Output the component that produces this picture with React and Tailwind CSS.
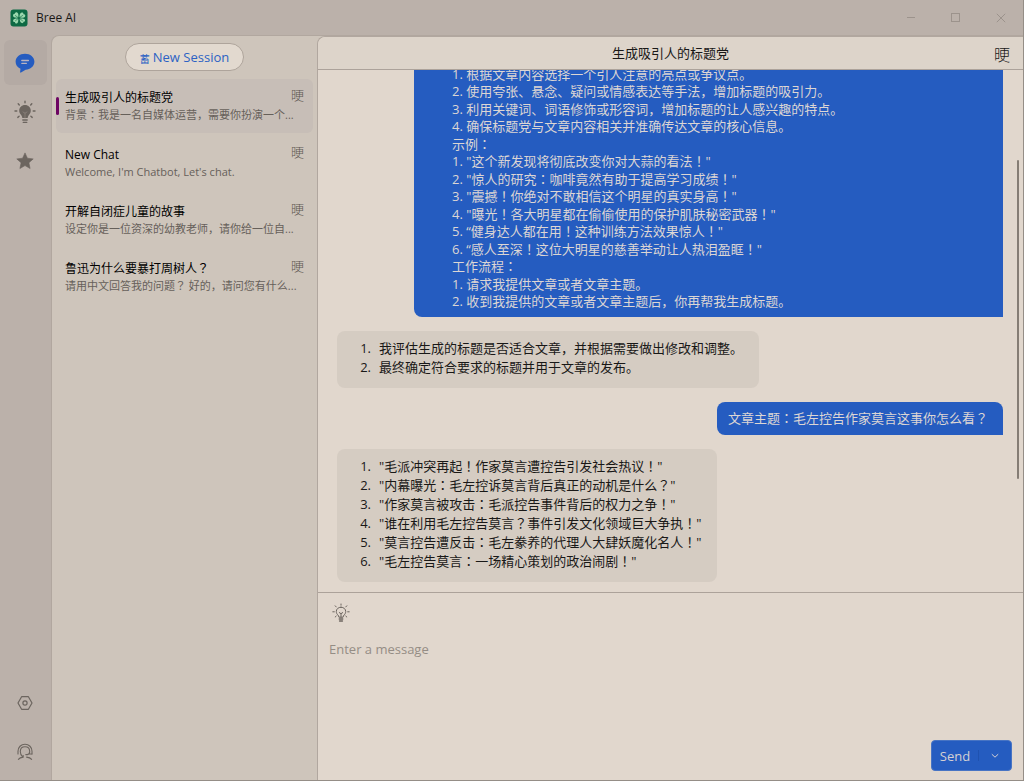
const MORE = "\u{231B3}";

const sessions = [
  { title: "生成吸引人的标题党", preview: "背景：我是一名自媒体运营，需要你扮演一个...", active: true },
  { title: "New Chat", preview: "Welcome, I'm Chatbot, Let's chat." },
  { title: "开解自闭症儿童的故事", preview: "设定你是一位资深的幼教老师，请你给一位自..." },
  { title: "鲁迅为什么要暴打周树人？", preview: "请用中文回答我的问题？ 好的，请问您有什么..." },
];

const promptLines = [
  "1. 根据文章内容选择一个引人注意的亮点或争议点。",
  "2. 使用夸张、悬念、疑问或情感表达等手法，增加标题的吸引力。",
  "3. 利用关键词、词语修饰或形容词，增加标题的让人感兴趣的特点。",
  "4. 确保标题党与文章内容相关并准确传达文章的核心信息。",
  "示例：",
  "1. \"这个新发现将彻底改变你对大蒜的看法！\"",
  "2. \"惊人的研究：咖啡竟然有助于提高学习成绩！\"",
  "3. \"震撼！你绝对不敢相信这个明星的真实身高！\"",
  "4. \"曝光！各大明星都在偷偷使用的保护肌肤秘密武器！\"",
  "5. “健身达人都在用！这种训练方法效果惊人！\"",
  "6. “感人至深！这位大明星的慈善举动让人热泪盈眶！\"",
  "工作流程：",
  "1. 请求我提供文章或者文章主题。",
  "2. 收到我提供的文章或者文章主题后，你再帮我生成标题。",
];

const stepLines = [
  "我评估生成的标题是否适合文章，并根据需要做出修改和调整。",
  "最终确定符合要求的标题并用于文章的发布。",
];

const titleLines = [
  "\"毛派冲突再起！作家莫言遭控告引发社会热议！\"",
  "\"内幕曝光：毛左控诉莫言背后真正的动机是什么？\"",
  "\"作家莫言被攻击：毛派控告事件背后的权力之争！\"",
  "\"谁在利用毛左控告莫言？事件引发文化领域巨大争执！\"",
  "\"莫言控告遭反击：毛左豢养的代理人大肆妖魔化名人！\"",
  "\"毛左控告莫言：一场精心策划的政治闹剧！\"",
];

/* Full-width colons and marks are set centred in their em box. */
function Zh({ children }) {
  return children.split(/([：！？])/).map((part, i) =>
    i % 2 ? (
      <span key={i} lang="zh-TW" className="font-['Noto_Sans_CJK_TC',sans-serif] leading-none">{part}</span>
    ) : (
      part
    )
  );
}

function Logo() {
  return (
    <svg viewBox="0 0 18 18" className="size-[18px]" aria-hidden="true">
      <rect x="0.5" y="0.5" width="17" height="17" rx="3" fill="#0d6a44" />
      <g fill="#9bd8ae">
        <path d="M8.300 8.600C5.500 9 3 8.500 3 6.500c0-1.300 1-1.900 1.900-1.800C5 3.500 5.900 3 6.800 3.200 8.500 3.600 8.600 6 8.300 8.600Z" />
        <path d="M9.500 8.600c-.1-2.600.5-4.700 2.300-5 1.100-.1 1.700.6 1.700 1.600 1.100 0 1.900.7 1.800 1.700-.2 1.700-2.600 2-5.800 1.700Z" />
        <path d="M8.200 9.500c.3 2.400 0 4.700-1.600 5-1 .2-1.700-.5-1.700-1.500-1.100.1-1.900-.6-1.800-1.600.2-1.700 2.500-2 5.100-1.900Z" />
        <path d="M9.600 9.500c3 0 5.400 0 5.500 1.700.1 1-.8 1.500-1.600 1.500 0 1-.7 1.600-1.600 1.400-1.600-.3-2.100-2.400-2.300-4.600Z" />
      </g>
      <path d="M5 6.300 8.800 9l4.300-2.800M5.200 12 8.800 9l4 3" fill="none" stroke="#0d6a44" strokeWidth="0.600" />
    </svg>
  );
}

function ChatIcon() {
  return (
    <svg viewBox="0 0 20 20" className="size-5" aria-hidden="true">
      <path d="M10 .8c5.300 0 9.400 3.500 9.400 8 0 4.400-4 7.700-8.800 7.900L6 19.600c-.5.300-1-.1-.9-.6l.4-3.300C2.500 14.400.6 11.900.6 8.800c0-4.500 4.100-8 9.400-8Z" fill="#255cc0" />
      <path d="M6.800 7.500h6.600M6.800 10.300h4.600" stroke="#b9b3c0" strokeWidth="1.300" strokeLinecap="round" />
    </svg>
  );
}

function BulbSolid() {
  return (
    <svg viewBox="0 0 22 24" className="h-6 w-[22px]" aria-hidden="true" fill="none" stroke="#6c655f" strokeWidth="1.400" strokeLinecap="round">
      <path d="M11 5c3.400 0 5.800 2.500 5.800 5.500 0 2-.9 3.300-1.900 4.500-.8 1-1.100 1.800-1.200 3H8.300c-.1-1.200-.4-2-1.200-3-1-1.200-1.900-2.500-1.900-4.500C5.200 7.500 7.600 5 11 5Z" fill="#6c655f" stroke="none" />
      <path d="M8.800 20h4.400M9.300 22.400h3.400M11 1.200v1.600M4.200 3.800l1.100 1.200M17.800 3.800 16.700 5M1 11h1.800M19.200 11H21M3.800 17.400l1.300-1.100M18.200 17.400l-1.300-1.100" />
      <path d="m9 12 2 1.200 2-1.200M11 13.200V18" stroke="#8f8780" strokeWidth="0.700" />
    </svg>
  );
}

function Star() {
  return (
    <svg viewBox="0 0 18 18" className="size-[18px]" aria-hidden="true">
      <path d="m9 .9 2.400 5.300 5.800.7-4.300 3.900 1.200 5.700L9 13.600l-5.100 2.900 1.200-5.700L.8 6.900l5.800-.7Z" fill="#6c655f" stroke="#6c655f" strokeLinejoin="round" strokeWidth="0.600" />
    </svg>
  );
}

function BulbOutline() {
  return (
    <svg viewBox="0 0 18 20" className="h-5 w-[18px]" aria-hidden="true" fill="none" stroke="#6c655f" strokeWidth="1" strokeLinecap="round">
      <path d="M9 4.200c2.900 0 4.700 2 4.700 4.300 0 1.700-.8 2.700-1.600 3.500-.6.700-.9 1.300-1 2.200H6.900c-.1-.9-.4-1.500-1-2.200-.8-.8-1.600-1.800-1.600-3.500 0-2.300 1.800-4.300 4.700-4.300Z" />
      <path d="M7.300 9.600 9 10.700l1.700-1.100M9 10.700v3.500M9 1v1.200M3.200 2.800l1 1.100M14.800 2.800l-1 1.100M.8 8.800h1.500M15.700 8.800h1.500M3.200 14l1-.9M14.800 14l-1-.9" />
      <path d="M7.300 16h3.400M7.600 18h2.800" strokeWidth="1.500" />
    </svg>
  );
}

function Settings() {
  return (
    <svg viewBox="0 0 16 16" className="size-4" aria-hidden="true" fill="none" stroke="#6c655f" strokeWidth="1.200" strokeLinejoin="round">
      <path d="M4.600 1.700h6.800L15 8l-3.600 6.300H4.600L1 8Z" />
      <circle cx="8" cy="8" r="2.100" />
    </svg>
  );
}

function Support() {
  return (
    <svg viewBox="0 0 16 18" className="h-[18px] w-4" aria-hidden="true" fill="none" stroke="#6c655f" strokeWidth="1.100" strokeLinecap="round">
      <path d="M1 11V8.300C1 4.300 4 1.200 8 1.200s7 3.100 7 7.100V11" />
      <path d="M3.300 8.500c0-2.900 1.900-4.800 4.700-4.800s4.700 1.900 4.700 4.800c0 2-.9 2.900-2.300 3.100H8.800M3.300 8.500c0 2.600.7 3.700 2.200 5M12.600 11h2.200" />
      <path d="M6.200 12.500v1.600c-2 .2-3.800.9-4.800 2.200M9.600 14.100c2.200.2 4 .9 5 2.200" />
    </svg>
  );
}

function Answer({ lines }) {
  return (
    <ol className="self-start rounded-lg bg-[#d5ccc2] pt-2 pr-4 pb-[11px] text-[13px] leading-[19px] text-[#191817]">
      {lines.map((line, i) => (
        <li key={line} className="flex gap-2">
          <span className="w-[34px] shrink-0 text-right">{i + 1}.</span>
          <span><Zh>{line}</Zh></span>
        </li>
      ))}
    </ol>
  );
}

export default function App() {
  return (
    <div className="flex h-screen flex-col overflow-hidden border-r border-b border-[#958e87] bg-[#bbb1aa] font-['Open_Sans','Noto_Sans_CJK_SC',sans-serif] text-[#191817]">
      <header className="flex h-[35px] shrink-0 items-center pl-[10px]">
        <Logo />
        <h1 className="ml-2 text-[12px] leading-4">Bree AI</h1>
        <div className="ml-auto flex text-[#9c938c]">
          <button aria-label="Minimize" className="flex h-8 w-[45px] items-center justify-center">
            <svg viewBox="0 0 10 10" className="size-[10px]" fill="none" stroke="currentColor"><path d="M1 4.500h8" /></svg>
          </button>
          <button aria-label="Maximize" className="flex h-8 w-[45px] items-center justify-center">
            <svg viewBox="0 0 10 10" className="size-[10px]" fill="none" stroke="currentColor"><rect x="0.500" y="0.500" width="8" height="8" /></svg>
          </button>
          <button aria-label="Close" className="flex h-8 w-[45px] items-center justify-center">
            <svg viewBox="0 0 10 10" className="size-[10px]" fill="none" stroke="currentColor"><path d="m.8.8 8.400 8.400M9.200.8.800 9.200" /></svg>
          </button>
        </div>
      </header>

      <div className="flex min-h-0 grow">
        <nav className="flex w-[51px] shrink-0 flex-col items-center pt-[5px] pr-px pb-[6px]">
          <button aria-label="Chat" className="flex h-[45px] w-[43px] items-center justify-center rounded-md bg-[#b4aaa4]"><ChatIcon /></button>
          <button aria-label="Prompts" className="mt-1 flex h-[45px] w-[43px] items-center justify-center"><BulbSolid /></button>
          <button aria-label="Favorites" className="mt-1 flex h-[45px] w-[43px] items-center justify-center"><Star /></button>
          <button aria-label="Settings" className="mt-auto flex h-[45px] w-[43px] items-center justify-center"><Settings /></button>
          <button aria-label="Support" className="mt-1 flex h-[45px] w-[43px] items-center justify-center"><Support /></button>
        </nav>

        <div className="flex min-w-0 grow rounded-tl-lg border-t border-l border-[#b1a79f] bg-[#cec5bb]">
          <aside className="flex w-[265px] shrink-0 flex-col px-1 pt-[7px]">
            <button className="flex h-7 w-[119px] items-center justify-center gap-[3px] self-center rounded-full border border-[#aea49b] bg-[#e2d9cf] text-[13px] leading-5 text-[#2c62c4]">
              <span className="pt-1 text-[10px] leading-3" aria-hidden="true">蓄</span>
              New Session
            </button>
            <ul className="mt-2 flex flex-col gap-[3px]">
              {sessions.map((s) => (
                <li
                  key={s.title}
                  className={
                    s.active
                      ? "flex h-[54px] items-center rounded-md bg-[#c7beb7]"
                      : "flex h-[54px] items-center rounded-md"
                  }
                >
                  <span className={s.active ? "h-[18px] w-[3px] shrink-0 rounded-full bg-[#6d0562]" : "w-[3px] shrink-0"} />
                  <a href="#session" className="block min-w-0 grow pb-px pl-[6px]">
                    <span className="flex items-start justify-between pr-[9px]">
                      <span className="text-[12px] leading-[18px] text-black"><Zh>{s.title}</Zh></span>
                      <span className="text-[13px] leading-3 font-light text-[#5d5751]">{MORE}</span>
                    </span>
                    <span className="block text-[11px] leading-[15px] whitespace-nowrap text-[#66605a]"><Zh>{s.preview}</Zh></span>
                  </a>
                </li>
              ))}
            </ul>
          </aside>

          <main className="flex min-w-0 grow flex-col rounded-tl-lg border-t border-l border-[#b1a79f] bg-[#e1d7cd]">
            <div className="flex h-[33px] shrink-0 items-center rounded-tl-lg border-b border-[#aca29a] bg-[#ddd4ca] pr-[13px] pl-[29px]">
              <h2 className="grow text-center text-[13px] leading-5">生成吸引人的标题党</h2>
              <button aria-label="More" className="pt-1 text-[16px] leading-5 font-light">{MORE}</button>
            </div>

            <div className="relative flex min-h-0 grow flex-col justify-end gap-[14px] overflow-hidden pr-5 pb-[10px] pl-[19px]">
              <div className="ml-[77px] rounded-l-lg bg-[#255cc0] pt-2 pb-[7px] pl-[38px] text-[13px] leading-[18px] text-[#dcd6d4]">
                {promptLines.map((line) => (
                  <p key={line} className="even:leading-[17px]"><Zh>{line}</Zh></p>
                ))}
              </div>
              <Answer lines={stepLines} />
              <div className="self-end rounded-t-lg rounded-bl-lg bg-[#255cc0] py-[7px] pr-[15px] pl-[11px] text-[13px] leading-[19px] text-[#dcd6d4]">
                <Zh>文章主题：毛左控告作家莫言这事你怎么看？</Zh>
              </div>
              <Answer lines={titleLines} />
              <div className="absolute top-[90px] right-1 h-[319px] w-[2px] rounded-full bg-[#857d75]" />
            </div>

            <form className="flex h-[188px] shrink-0 flex-col border-t border-[#aca29a] pr-[11px] pb-[9px] pl-[11px]" onSubmit={(e) => e.preventDefault()}>
              <button type="button" aria-label="Prompt library" className="mt-[10px] ml-[3px] self-start"><BulbOutline /></button>
              <textarea
                aria-label="Message"
                placeholder="Enter a message"
                className="mt-4 min-h-0 grow resize-none bg-transparent text-[13px] leading-5 outline-none placeholder:text-[#958d85]"
              />
              <div className="flex h-[31px] shrink-0 self-end rounded border border-[#4774c4] bg-[#255cc0] text-[13px] leading-5 text-[#d6d1d3]">
                <button type="submit" className="w-[46px]">Send</button>
                <button type="button" aria-label="Send options" className="my-[9px] flex w-[33px] items-center justify-center border-l border-[#1f52b0]">
                  <svg viewBox="0 0 8 6" className="h-[6px] w-2" fill="none" stroke="currentColor"><path d="m.8 1.200 3.200 3 3.200-3" /></svg>
                </button>
              </div>
            </form>
          </main>
        </div>
      </div>
    </div>
  );
}
